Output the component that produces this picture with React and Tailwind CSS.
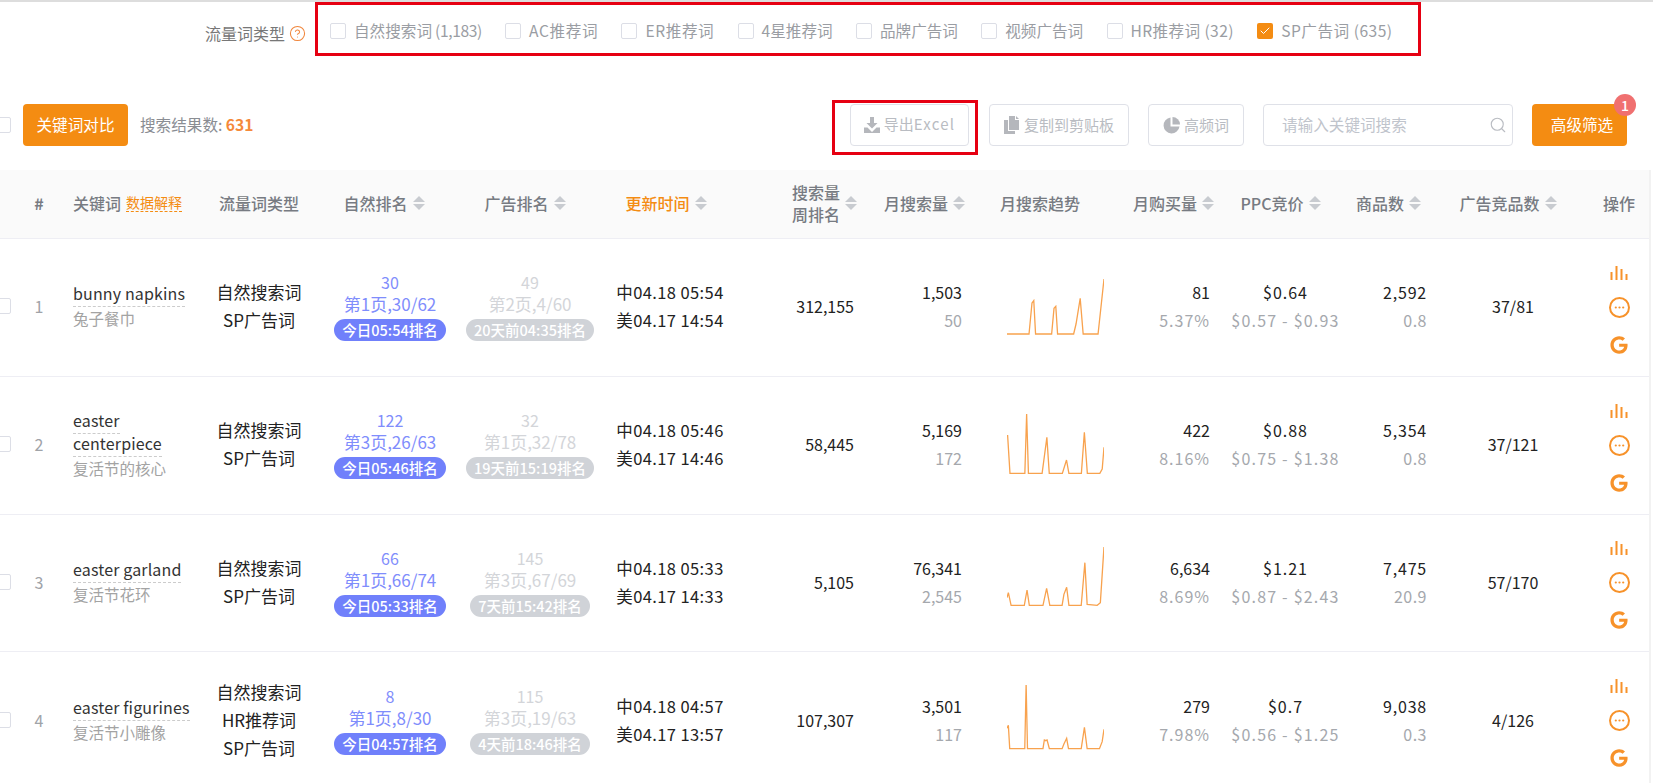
import { Check, CircleHelp, Search } from 'lucide-react';
import { FaGoogle } from 'react-icons/fa';

const filters = [
  { label: '自然搜索词', count: ' (1,183)', tight: true },
  { label: 'AC推荐词', track: 'tracking-[0.6px]' },
  { label: 'ER推荐词', track: 'tracking-[0.6px]' },
  { label: '4星推荐词' },
  { label: '品牌广告词' },
  { label: '视频广告词' },
  { label: 'HR推荐词 (32)', track: 'tracking-[0.4px]' },
  { label: 'SP广告词 (635)', track: 'tracking-[0.5px]', checked: true },
];

const rows = [
  {
    no: 1,
    words: ['bunny napkins'],
    zh: '兔子餐巾',
    types: ['自然搜索词', 'SP广告词'],
    rank: ['30', '第1页,30/62', '今日05:54排名'],
    ad: ['49', '第2页,4/60', '20天前04:35排名'],
    time: ['中04.18 05:54', '美04.17 14:54'],
    weekRank: '312,155',
    search: ['1,503', '50'],
    buy: ['81', '5.37%'],
    ppc: ['$0.64', '$0.57 - $0.93'],
    goods: ['2,592', '0.8'],
    comp: '37/81',
    view: '482 126 163 210',
    line: '482,315 519,315 524,222 527,215 530,315 557,315 561,238 564,232 567,315 594,315 598,285 605,208 610,315 635,315 645,150',
  },
  {
    no: 2,
    words: ['easter centerpiece'],
    zh: '复活节的核心',
    types: ['自然搜索词', 'SP广告词'],
    rank: ['122', '第3页,26/63', '今日05:46排名'],
    ad: ['32', '第1页,32/78', '19天前15:19排名'],
    time: ['中04.18 05:46', '美04.17 14:46'],
    weekRank: '58,445',
    search: ['5,169', '172'],
    buy: ['422', '8.16%'],
    ppc: ['$0.88', '$0.75 - $1.38'],
    goods: ['5,354', '0.8'],
    comp: '37/121',
    view: '482 540 163 210',
    line: '483,618 487,733 512,733 515,555 518,733 541,733 549,625 553,733 575,733 582,693 586,733 607,733 612,610 617,733 638,733 642,720 645,655',
  },
  {
    no: 3,
    words: ['easter garland'],
    zh: '复活节花环',
    types: ['自然搜索词', 'SP广告词'],
    rank: ['66', '第1页,66/74', '今日05:33排名'],
    ad: ['145', '第3页,67/69', '7天前15:42排名'],
    time: ['中04.18 05:33', '美04.17 14:33'],
    weekRank: '5,105',
    search: ['76,341', '2,545'],
    buy: ['6,634', '8.69%'],
    ppc: ['$1.21', '$0.87 - $2.43'],
    goods: ['7,475', '20.9'],
    comp: '57/170',
    view: '147 173 213 210',
    line: '147,325 150,310 156,348 185,348 191,302 196,348 226,348 234,297 241,348 268,348 272,315 278,294 283,348 310,348 318,220 323,345 345,348 352,340 360,172',
  },
  {
    no: 4,
    words: ['easter figurines'],
    zh: '复活节小雕像',
    types: ['自然搜索词', 'HR推荐词', 'SP广告词'],
    rank: ['8', '第1页,8/30', '今日04:57排名'],
    ad: ['115', '第3页,19/63', '4天前18:46排名'],
    time: ['中04.18 04:57', '美04.17 13:57'],
    weekRank: '107,307',
    search: ['3,501', '117'],
    buy: ['279', '7.98%'],
    ppc: ['$0.7', '$0.56 - $1.25'],
    goods: ['9,038', '0.3'],
    comp: '4/126',
    view: '147 585 213 210',
    line: '147,715 150,706 153,776 186,776 189,582 192,776 226,776 229,750 232,752 235,750 240,776 268,776 272,762 278,745 282,776 310,776 317,712 323,776 350,776 356,755 360,718',
  },
];

const columns =
  'grid grid-cols-[20px_38px_142px_118px_144px_136px_144px_115px_108px_150px_99px_143px_73px_166px_46px_1fr]';

function Box({ checked, className = '' }) {
  if (checked) {
    return (
      <span className={`flex h-4 w-4 shrink-0 items-center justify-center rounded-[2px] bg-[#f48c12] ${className}`}>
        <Check size={12} color="#fff" strokeWidth={2} />
      </span>
    );
  }
  return <span className={`block h-4 w-4 shrink-0 rounded-[2px] border border-[#dcdee6] bg-white ${className}`} />;
}

function Sort() {
  return (
    <span className="ml-[5px] flex shrink-0 flex-col gap-[2px]">
      <span className="h-0 w-0 border-x-[6px] border-b-[6px] border-x-transparent border-b-[#c8cbd0]" />
      <span className="h-0 w-0 border-x-[6px] border-t-[6px] border-x-transparent border-t-[#c8cbd0]" />
    </span>
  );
}

function BarsIcon() {
  return (
    <svg width="18" height="14" viewBox="0 0 18 14" fill="#f7922a">
      <rect x="0.5" y="6" width="2" height="8" />
      <rect x="5.5" y="0" width="2" height="14" />
      <rect x="10.5" y="3" width="2" height="11" />
      <rect x="15.5" y="8" width="2" height="6" />
    </svg>
  );
}

function MoreIcon() {
  return (
    <svg width="21" height="21" viewBox="0 0 21 21" fill="none">
      <circle cx="10.500" cy="10.500" r="9.500" stroke="#f7922a" strokeWidth="2" />
      <circle cx="6.800" cy="10.500" r="1.100" fill="#f7922a" />
      <circle cx="10.500" cy="10.500" r="1.100" fill="#f7922a" />
      <circle cx="14.200" cy="10.500" r="1.100" fill="#f7922a" />
    </svg>
  );
}

function DownloadIcon() {
  return (
    <svg width="16" height="16" viewBox="0 0 16 16" fill="#b5b7bc" className="shrink-0">
      <path d="M6 0h4v6h3.500L8 11.500 2.500 6H6z" />
      <path d="M0 10.500h3.500L8 15l4.500-4.500H16V16H0z" />
    </svg>
  );
}

function CopyIcon() {
  return (
    <svg width="16" height="18" viewBox="0 0 16 18" fill="#b5b7bc" className="shrink-0">
      <path d="M5 0h6v4h4v10H5z" />
      <path d="M12 0l3 3h-3z" />
      <path d="M0 4h4v11h7v3H0z" />
    </svg>
  );
}

function PieIcon() {
  return (
    <svg width="17" height="17" viewBox="0 0 17 17" fill="#b5b7bc" className="shrink-0">
      <path d="M7.500 0.500v9h9A8 8 0 1 1 7.500 0.500z" />
      <path d="M9.500 0a7.500 7.500 0 0 1 7.500 7.500H9.500z" />
    </svg>
  );
}

const ghostBtn =
  'flex h-[42px] items-center justify-center gap-[4px] rounded-[4px] border border-[#dfe1e8] bg-white text-[15px] text-[#b9bcc2]';

function Row({ r }) {
  return (
    <div className={`${columns} h-[137.8px] items-center border-b border-[#eeeef4] pb-[2px] text-[16px] text-[#222]`}>
      <Box className="-ml-[5px]" />
      <div className="text-center text-[16px] text-[#a0a3a8]">{r.no}</div>
      <div className="pl-[15px] pr-[4px] leading-[23px]">
        <div className="text-[16px] tracking-[0.15px] text-[#333]">
          {r.words.map((w) => (
            <span key={w} className="border-b border-dashed border-[#ccc] pb-[1px]">
              {w}
            </span>
          ))}
        </div>
        <div className="mt-[2px] text-[15.500px] text-[#a3a3a3]">{r.zh}</div>
      </div>
      <div className="text-center text-[17px] leading-[28px]">
        {r.types.map((t) => (
          <div key={t}>{t}</div>
        ))}
      </div>
      <div className="flex flex-col items-center text-[17px] leading-[22px] text-[#7f8dfc]">
        <div className="text-[16px]">{r.rank[0]}</div>
        <div>{r.rank[1]}</div>
        <div className="mt-[4px] h-[22px] rounded-full bg-[#7080fb] px-[8px] text-[14.500px] font-medium text-white">
          {r.rank[2]}
        </div>
      </div>
      <div className="flex flex-col items-center text-[17px] leading-[22px] text-[#d3d5d9]">
        <div className="text-[16px]">{r.ad[0]}</div>
        <div>{r.ad[1]}</div>
        <div className="mt-[4px] h-[22px] rounded-full bg-[#d0d3d8] px-[8px] text-[14.500px] font-medium text-white">
          {r.ad[2]}
        </div>
      </div>
      <div className="text-center text-[16.500px] leading-[28px] tracking-[0.4px]">
        <div>{r.time[0]}</div>
        <div>{r.time[1]}</div>
      </div>
      <div className="pr-[3px] text-right">{r.weekRank}</div>
      <div className="pr-[3px] text-right leading-[28px]">
        <div>{r.search[0]}</div>
        <div className="text-[#a5a8ad]">{r.search[1]}</div>
      </div>
      <div className="pl-[42px]">
        <svg width="97" height="70" viewBox={r.view} preserveAspectRatio="none" className="block">
          <polyline
            points={r.line}
            fill="none"
            stroke="#f8a24e"
            strokeWidth="1.300"
            vectorEffect="non-scaling-stroke"
          />
        </svg>
      </div>
      <div className="pr-[4px] text-right leading-[28px]">
        <div>{r.buy[0]}</div>
        <div className="tracking-[1px] text-[#a5a8ad]">{r.buy[1]}</div>
      </div>
      <div className="whitespace-nowrap text-center leading-[28px]">
        <div className="tracking-[1px]">{r.ppc[0]}</div>
        <div className="tracking-[1.200px] text-[#a5a8ad]">{r.ppc[1]}</div>
      </div>
      <div className="pr-[3px] text-right leading-[28px]">
        <div className="tracking-[0.800px]">{r.goods[0]}</div>
        <div className="tracking-[0.500px] text-[#a5a8ad]">{r.goods[1]}</div>
      </div>
      <div className="text-center">{r.comp}</div>
      <div className="flex flex-col items-center pt-[7px] text-[#f7922a]">
        <BarsIcon />
        <div className="mb-[18px] mt-[17px]">
          <MoreIcon />
        </div>
        <FaGoogle size={18} />
      </div>
    </div>
  );
}

export default function App() {
  return (
    <div className="h-[783px] w-[1653px] overflow-hidden bg-white font-['Noto_Sans_CJK_SC',sans-serif]">
      <div className="h-[2px] bg-[#dddddd]" />

      {/* 流量词类型 */}
      <div className="flex items-start pl-[205px]">
        <div className="mt-[19px] flex items-center text-[16px] leading-[24px] text-[#777]">
          流量词类型
          <CircleHelp size={17} color="#f0863c" strokeWidth={1.500} className="ml-[4px]" />
        </div>
        <div className="ml-[9px] flex h-[54px] w-[1106px] gap-[23.300px] border-[3px] border-[#e60012] pl-[12px] pt-[13px]">
          {filters.map((f) => (
            <label key={f.label} className="flex h-[24px] items-center gap-[8px] text-[15.600px] leading-[24px] whitespace-pre text-[#9a9da3]">
              <Box checked={f.checked} className="mt-[2px]" />
              <span className={f.track}>
                {f.label}
                {f.count && <span className="tracking-[-0.400px]">{f.count}</span>}
              </span>
            </label>
          ))}
        </div>
      </div>

      {/* toolbar */}
      <div className="mt-[48px] flex h-[42px] items-center pr-[26px]">
        <Box className="-ml-[5px]" />
        <button className="ml-[12px] h-[42px] w-[105px] rounded-[4px] bg-[#f48c12] text-[15.600px] text-white">
          关键词对比
        </button>
        <div className="ml-[12px] text-[15.600px] text-[#8a8d93]">
          搜索结果数: <span className="font-bold text-[#f5893a]">631</span>
        </div>

        <div className="ml-auto -mt-[5px] -mb-[9px] border-[3px] border-[#e60012] pb-[6px] pl-[15px] pr-[6px] pt-[1px]">
          <button className={`${ghostBtn} w-[119px]`}>
            <DownloadIcon />
            <span>
              导出<span className="tracking-[1.200px]">Excel</span>
            </span>
          </button>
        </div>
        <button className={`${ghostBtn} ml-[11px] w-[140px]`}>
          <CopyIcon />
          复制到剪贴板
        </button>
        <button className={`${ghostBtn} ml-[19px] w-[96px]`}>
          <PieIcon />
          高频词
        </button>
        <div className="ml-[19px] flex h-[42px] w-[250px] items-center justify-between rounded-[4px] border border-[#dfe1e8] pl-[18px] pr-[5px] text-[15.600px] text-[#c0c4cc]">
          请输入关键词搜索
          <Search size={18} color="#b9bcc2" strokeWidth={1.500} />
        </div>
        <div className="relative ml-[19px]">
          <button className="h-[42px] w-[95px] rounded-[4px] bg-[#f48c12] pl-[5px] text-[15.600px] text-white">
            高级筛选
          </button>
          <span className="absolute -right-[9px] -top-[10px] flex h-[22px] w-[22px] items-center justify-center rounded-full bg-[#f07070] text-[14px] font-medium text-white">
            1
          </span>
        </div>
      </div>

      {/* table */}
      <div className="mt-[24px] w-[1651px] border-r-2 border-[#f2f2f2]">
        <div className={`${columns} h-[69px] items-center border-b border-[#eeeef4] bg-[#fafafa] pb-[3px] text-[16px] font-medium text-[#777b82]`}>
          <div />
          <div className="text-center font-bold">#</div>
          <div className="flex items-center pl-[15px]">
            关键词
            <span className="ml-[5px] border-b border-dashed border-[#f48c12] text-[14px] font-normal leading-[17px] text-[#f48c12]">
              数据解释
            </span>
          </div>
          <div className="text-center">流量词类型</div>
          <div className="flex items-center justify-center pr-[12px]">
            自然排名
            <Sort />
          </div>
          <div className="flex items-center justify-center pr-[10px]">
            广告排名
            <Sort />
          </div>
          <div className="flex items-center justify-center pr-[8px] text-[#f48c12]">
            更新时间
            <Sort />
          </div>
          <div className="flex items-center justify-end">
            <div className="leading-[22px]">
              搜索量
              <br />
              周排名
            </div>
            <Sort />
          </div>
          <div className="flex items-center justify-end">
            月搜索量
            <Sort />
          </div>
          <div className="pl-[35px]">月搜索趋势</div>
          <div className="flex items-center justify-end">
            月购买量
            <Sort />
          </div>
          <div className="flex items-center justify-center pr-[10px]">
            PPC竞价
            <Sort />
          </div>
          <div className="-ml-[4px] flex items-center justify-end pr-[9px] whitespace-nowrap">
            商品数
            <Sort />
          </div>
          <div className="flex items-center justify-center pr-[10px]">
            广告竞品数
            <Sort />
          </div>
          <div className="text-center">操作</div>
        </div>

        {rows.map((r) => (
          <Row key={r.no} r={r} />
        ))}
      </div>
    </div>
  );
}
